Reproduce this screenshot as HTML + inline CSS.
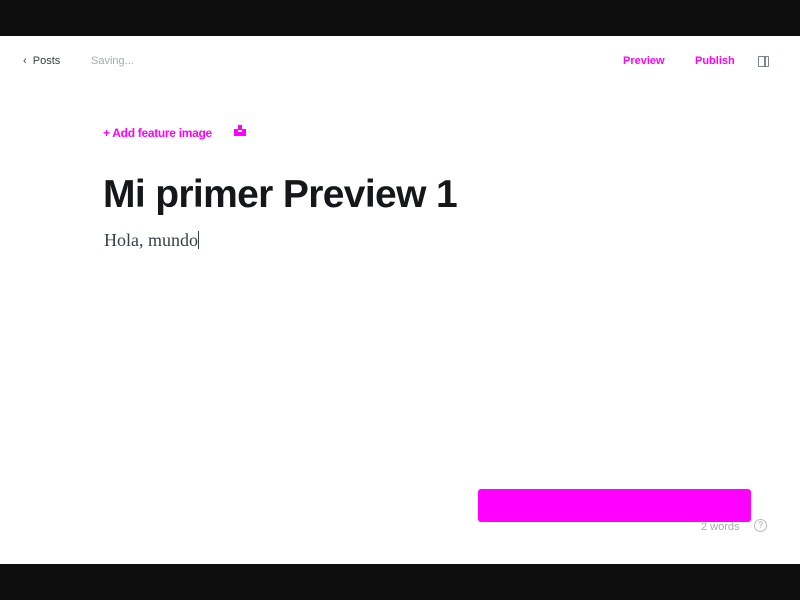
<!DOCTYPE html>
<html><head><style>
body{margin:0;width:800px;height:600px;background:#0e0e0e;position:relative;overflow:hidden;font-family:"Liberation Sans",sans-serif}
.pg{position:absolute;left:0;top:36px;width:800px;height:528px;background:#fff}
.a{position:absolute;white-space:nowrap}
</style></head><body>
<div class="pg">
<div class="a" style="left:23px;top:19px;font-size:11px;color:#394047">‹&nbsp;&nbsp;Posts</div>
<div class="a" style="left:91px;top:19px;font-size:11px;color:#a3abb3">Saving...</div>
<div class="a" style="left:623px;top:19px;font-size:11px;font-weight:bold;color:#f0f">Preview</div>
<div class="a" style="left:695px;top:19px;font-size:11px;font-weight:bold;color:#f0f">Publish</div>
<div class="a" style="left:758px;top:20px;width:9px;height:9px;border:1.5px solid #7c8289;border-radius:1px"><div style="position:absolute;left:5px;top:0;width:1.5px;height:9px;background:#7c8289"></div></div>
<div class="a" style="left:103px;top:90px;font-size:12px;font-weight:bold;color:#f0f;letter-spacing:-0.3px">+ Add feature image</div>
<div class="a" style="left:234px;top:89px;width:12px;height:11px"><div style="position:absolute;left:4px;top:0;width:4px;height:4px;background:#f0f"></div><div style="position:absolute;left:0;top:4px;width:12px;height:7px;background:#f0f"></div><div style="position:absolute;left:4px;top:5px;width:4px;height:2px;background:#fff"></div></div>
<div class="a" style="left:103px;top:137px;font-size:39px;font-weight:bold;color:#15171a;letter-spacing:-0.65px">Mi primer Preview 1</div>
<div class="a" style="left:104px;top:194px;font-size:18px;font-family:'Liberation Serif',serif;color:#394047">Hola, mundo<span style="display:inline-block;width:1px;height:18px;background:#394047;vertical-align:-3px"></span></div>
<div class="a" style="left:478px;top:453px;width:273px;height:33px;background:#f0f;border-radius:3px"></div>
<div class="a" style="left:701px;top:485px;font-size:11px;color:#a3abb3">2 words</div>
<div class="a" style="left:754px;top:483px;width:11px;height:11px;border:1px solid #b5bcc3;border-radius:50%;font-size:9px;color:#a3abb3;text-align:center;line-height:11px">?</div>
</div>
</body></html>
